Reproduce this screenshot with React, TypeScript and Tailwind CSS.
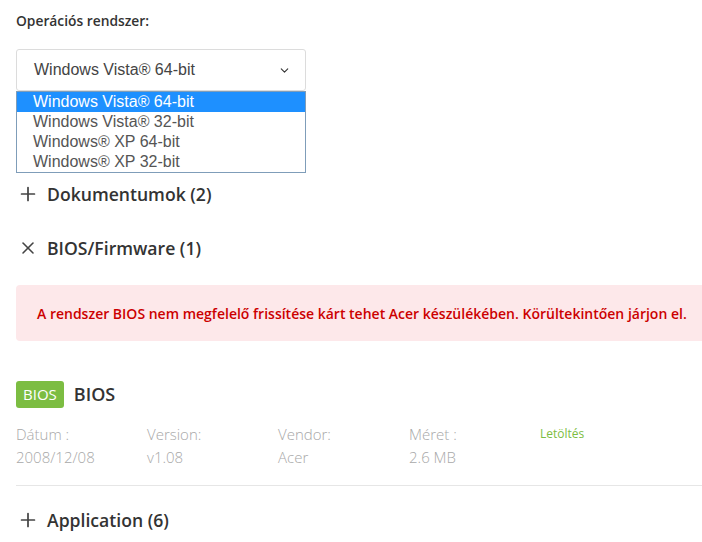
import { ChevronDown, Plus, X } from "lucide-react";

const options = [
  "Windows Vista® 64-bit",
  "Windows Vista® 32-bit",
  "Windows® XP 64-bit",
  "Windows® XP 32-bit",
];

const meta = [
  { label: "Dátum :", value: "2008/12/08" },
  { label: "Version:", value: "v1.08" },
  { label: "Vendor:", value: "Acer" },
  { label: "Méret :", value: "2.6 MB" },
];

export default function App() {
  return (
    <div className="w-[702px] h-[542px] overflow-hidden bg-white pl-4 font-['Open_Sans',sans-serif] text-[#333]">
      {/* OS picker */}
      <div className="pt-[11px] text-[13.8px] font-semibold leading-[20px]">Operációs rendszer:</div>

      <div className="relative mt-[18px] w-[290px]">
        <div className="flex h-[42px] items-center justify-between rounded-[3px] border border-[#dcdcdc] pl-[17px] pr-[14px] font-['Liberation_Sans',sans-serif] text-[16px] text-[#444]">
          <span>Windows Vista® 64-bit</span>
          <ChevronDown className="h-[13px] w-[13px] text-[#333]" strokeWidth={2} />
        </div>
        <ul className="border border-[#7f9db9] font-['Liberation_Sans',sans-serif] text-[16px] leading-[20px] text-[#555]">
          {options.map((o, i) => (
            <li key={o} className={i === 0 ? "bg-[#1e90ff] pl-4 text-white" : "pl-4"}>
              {o}
            </li>
          ))}
        </ul>
      </div>

      {/* Accordions */}
      <div className="mt-[9px] flex h-[24px] items-center text-[17.6px] font-semibold">
        <Plus className="ml-[1px] mr-[8px] h-[22px] w-[22px] text-[#444]" strokeWidth={1.9} />
        <span>Dokumentumok (2)</span>
      </div>

      <div className="mt-[30px] flex h-[24px] items-center text-[17.6px] font-semibold">
        <X className="ml-[2px] mr-[9px] h-[20px] w-[20px] text-[#444]" strokeWidth={1.9} />
        <span>BIOS/Firmware (1)</span>
      </div>

      <div className="mt-[25px] flex h-[56px] items-center rounded-l-[4px] bg-[#fde8ea] pl-[21px] text-[14px] font-semibold text-[#cc0000]">
        A rendszer BIOS nem megfelelő frissítése kárt tehet Acer készülékében. Körültekintően járjon el.
      </div>

      {/* BIOS entry */}
      <div className="mt-[40px] flex items-center gap-[10px]">
        <span className="flex h-[27px] items-center rounded-[3px] bg-[#7cbd42] px-[7px] text-[15px] text-white">BIOS</span>
        <span className="text-[18px] font-semibold">BIOS</span>
      </div>

      <div className="mt-[15px] flex text-[15px] font-light text-[#a8a8a8]">
        {meta.map((m) => (
          <div key={m.label} className="w-[131px] leading-[23px]">
            <div>{m.label}</div>
            <div>{m.value}</div>
          </div>
        ))}
        <div className="pt-[1px] text-[12px] font-normal leading-[20px] text-[#7cbd42]">Letöltés</div>
      </div>

      <div className="mt-[16px] border-t border-[#e6e6e6]" />

      <div className="mt-[22px] flex h-[24px] items-center text-[17.6px] font-semibold">
        <Plus className="ml-[1px] mr-[8px] h-[22px] w-[22px] text-[#444]" strokeWidth={1.9} />
        <span>Application (6)</span>
      </div>
    </div>
  );
}
